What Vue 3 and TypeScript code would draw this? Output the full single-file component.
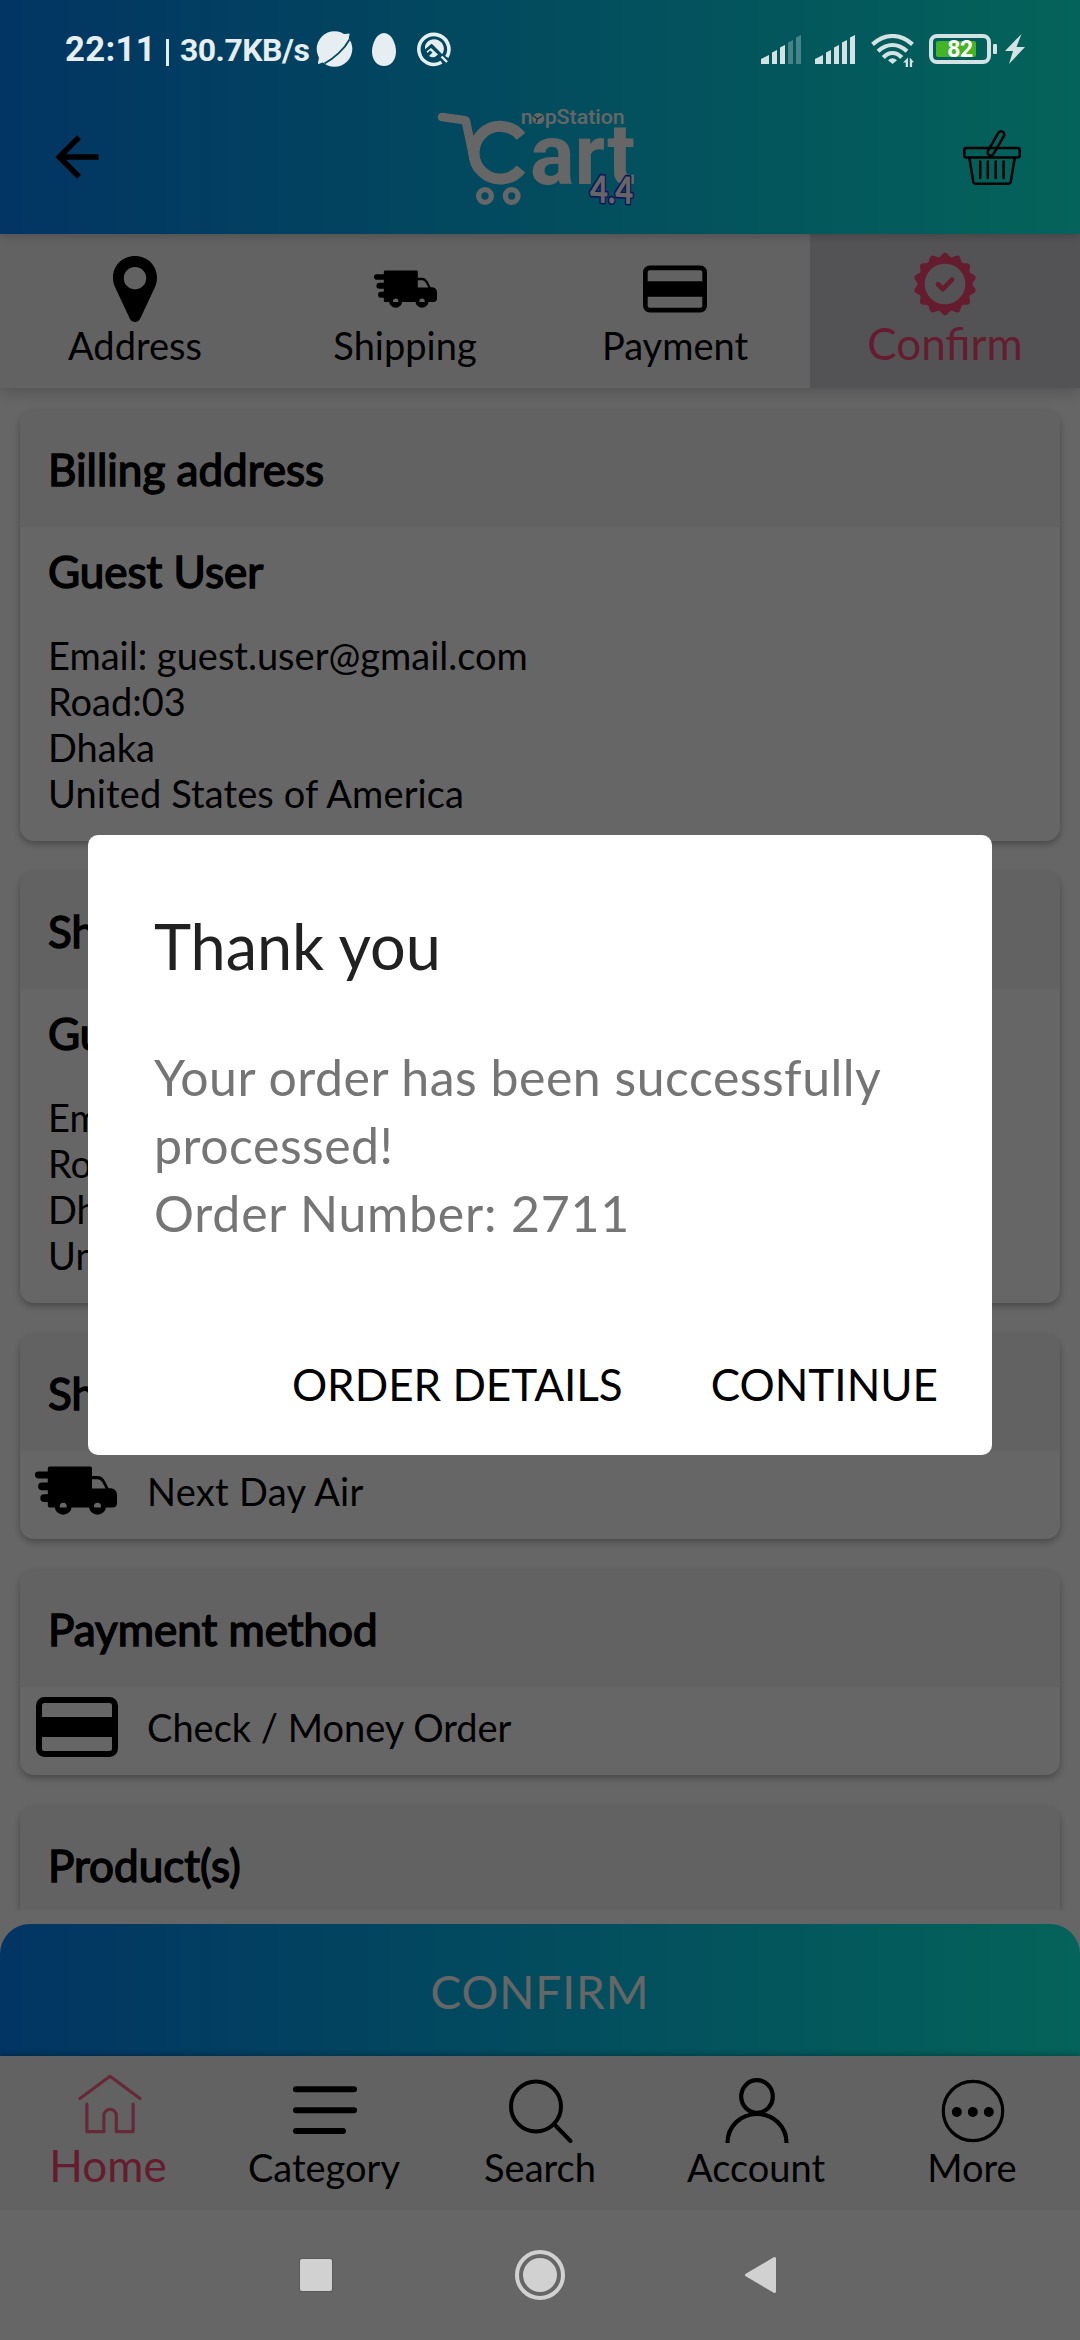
<script setup lang="ts">
interface Step { label: string; icon: string; active?: boolean }
interface Tab { label: string; icon: string; active?: boolean }
interface Address { title: string; name: string; lines: string[] }
interface Method { title: string; icon: string; text: string }

const steps: Step[] = [
  { label: 'Address', icon: 'pin' },
  { label: 'Shipping', icon: 'truck' },
  { label: 'Payment', icon: 'card' },
  { label: 'Confirm', icon: 'badge', active: true },
]

const lines = ['Email: guest.user@gmail.com', 'Road:03', 'Dhaka', 'United States of America']
const addresses: Address[] = [
  { title: 'Billing address', name: 'Guest User', lines },
  { title: 'Shipping address', name: 'Guest User', lines },
]

const methods: Method[] = [
  { title: 'Shipping method', icon: 'truck', text: 'Next Day Air' },
  { title: 'Payment method', icon: 'card', text: 'Check / Money Order' },
]

const tabs: Tab[] = [
  { label: 'Home', icon: 'home', active: true },
  { label: 'Category', icon: 'list' },
  { label: 'Search', icon: 'search' },
  { label: 'Account', icon: 'user' },
  { label: 'More', icon: 'more' },
]

// Scalloped rim of the confirm badge: 14 lobes around a circle, with a round hole.
const badgePath = (() => {
  const pts: string[] = []
  for (let i = 0; i < 168; i++) {
    const a = (i / 168) * Math.PI * 2
    const r = 29.4 + 2 * Math.cos(14 * a)
    pts.push(`${(32 + r * Math.sin(a)).toFixed(2)} ${(32 - r * Math.cos(a)).toFixed(2)}`)
  }
  return `M${pts.join('L')}ZM32 11.7a20.3 20.3 0 1 0 0 40.6a20.3 20.3 0 1 0 0-40.6Z`
})()

const signalBars = [
  'M0 29v-5l8-4v9z',
  'M11 29V17.500l5-2.500v14z',
  'M19 29V12.500l5-2.500v19z',
  'M27 29V7.500l5-2.500v24z',
  'M35 29V2.500l5-2.500v29z',
]
</script>

<template>
  <div class="phone">
    <svg class="defs" width="0" height="0" aria-hidden="true">
      <symbol id="pin" viewBox="0 0 44 66">
        <path fill-rule="evenodd" d="M22 0C9.500 0 0 9.500 0 21.500c0 4 .8 7 2.200 10L16.500 62c2 5.300 9 5.300 11 0L41.800 31.500c1.400-3 2.200-6 2.200-10C44 9.500 34.500 0 22 0ZM22 11a11.200 11.200 0 1 1 0 22.400a11.200 11.200 0 1 1 0-22.400Z" />
      </symbol>
      <symbol id="truck" viewBox="0 0 82 49">
        <path fill-rule="evenodd" d="M14.500 .5h40.800q1.700 0 1.700 1.700V10h5.500c5 0 7 3.500 11 12.300h2.500q6 1 6 7V37q0 4.500-4.500 4.500H14.500q-1.700 0-1.700-1.700V36H9.200a3.600 3.600 0 0 1 0-7.800h3.600v-4H7a3.600 3.600 0 0 1 0-7.800h5.800v-4H3.400a3.400 3.400 0 0 1 0-7h9.400V2.200q0-1.700 1.700-1.700ZM57 13.200v9.400h13.600c-3-6.500-4.600-9.400-8.600-9.400ZM28.200 35.300a5 5 0 1 0 0 10a5 5 0 1 0 0-10ZM62.500 35.300a5 5 0 1 0 0 10a5 5 0 1 0 0-10Z" />
        <circle cx="28.200" cy="40.300" r="6" fill="none" stroke="currentColor" stroke-width="5" />
        <circle cx="62.500" cy="40.300" r="6" fill="none" stroke="currentColor" stroke-width="5" />
      </symbol>
      <symbol id="card" viewBox="0 0 82 60">
        <rect x="3" y="3" width="76" height="54" rx="5.500" fill="none" stroke="currentColor" stroke-width="6" />
        <path d="M3 20h76v20H3z" />
      </symbol>
      <symbol id="badge" viewBox="0 0 64 64">
        <path fill-rule="evenodd" :d="badgePath" />
        <path d="M25 32.300l4.800 4.800l9.200-9.500" fill="none" stroke="currentColor" stroke-width="4.800" stroke-linecap="round" stroke-linejoin="round" />
      </symbol>
      <symbol id="home" viewBox="0 0 66 66">
        <g fill="none" stroke="currentColor" stroke-width="3.200" stroke-linecap="round" stroke-linejoin="round" opacity=".82">
          <path d="M4 26.500L34 4.200L64 26.500" />
          <path d="M10.900 32V59.700h17V43.500a6.200 6.200 0 0 1 12.400 0V59.700h16.800V32" />
        </g>
      </symbol>
      <symbol id="list" viewBox="0 0 66 66">
        <path d="M4 17.300h58M4 38.300h58M4 59h47" stroke="currentColor" stroke-width="6" stroke-linecap="round" />
      </symbol>
      <symbol id="search" viewBox="0 0 66 66">
        <g fill="none" stroke="currentColor" stroke-width="4" stroke-linecap="round">
          <circle cx="28" cy="34.500" r="25" />
          <path d="M46 52l16.500 17" />
        </g>
      </symbol>
      <symbol id="user" viewBox="0 0 66 66">
        <g fill="none" stroke="currentColor" stroke-width="4.200">
          <ellipse cx="33" cy="24.500" rx="15.800" ry="16.300" />
          <path d="M3.500 71C3.500 54 17 42 33 42S62.500 54 62.500 71" />
        </g>
      </symbol>
      <symbol id="more" viewBox="0 0 66 66">
        <circle cx="33" cy="39" r="29.700" fill="none" stroke="currentColor" stroke-width="3.200" />
        <circle cx="16.800" cy="40" r="5" /><circle cx="32.800" cy="40" r="5" /><circle cx="48.800" cy="40" r="5" />
      </symbol>
    </svg>

    <header class="header">
      <div class="status">
        <div class="status-left">
          <span class="clock">22:11</span>
          <span class="divider"></span>
          <span class="speed">30.7KB/s</span>
          <svg class="s-planet" width="38" height="38" viewBox="0 0 38 38">
            <circle cx="19.500" cy="19" r="17.800" fill="currentColor" />
            <path d="M3.500 33.500L5 24L13 30Z M34.200 4L25 5L32 13Z" fill="currentColor" stroke="currentColor" stroke-width="1" stroke-linejoin="round" />
            <path d="M9.500 33.500C19 28.500 29.500 19 34.500 9.500" fill="none" stroke="#034860" stroke-width="1.800" />
          </svg>
          <svg class="s-egg" width="24" height="33" viewBox="0 0 24 33">
            <path d="M12 0C5 0 0 10 0 18.500S5 33 12 33s12-6 12-14.500S19 0 12 0Z" fill="currentColor" />
          </svg>
          <svg class="s-ring" width="36" height="36" viewBox="0 0 36 36">
            <path d="M25.500 31.300A15 15 0 1 1 30.800 26" fill="none" stroke="currentColor" stroke-width="3.600" />
            <path d="M9 15.200A9.600 9.600 0 1 1 26 23.500L16.500 13.500L9 19.500Z" fill="currentColor" />
            <path d="M8.500 20L15.500 14L27.500 26" fill="none" stroke="#034960" stroke-width="2" />
            <path d="M10.500 20.500L15 17L22 23.500Q18 28 13 25L16.500 21.500L14 19.500L11.500 22Z" fill="currentColor" />
            <path d="M25.500 25.500L31 31" stroke="currentColor" stroke-width="2.400" />
          </svg>
        </div>
        <div class="status-right">
          <svg width="40" height="29" viewBox="0 0 40 29">
            <path v-for="(bar, i) in signalBars" :key="i" :d="bar" fill="currentColor" :opacity="i > 2 ? 0.32 : 1" />
          </svg>
          <svg class="s-signal" width="40" height="29" viewBox="0 0 40 29">
            <path v-for="(bar, i) in signalBars" :key="i" :d="bar" fill="currentColor" />
          </svg>
          <svg class="s-wifi" width="44" height="34" viewBox="0 0 44 34">
            <g fill="none" stroke="currentColor" stroke-width="4.200">
              <path d="M1.500 10.300Q11 2 21.500 2T41.500 10.300" />
              <path d="M7 17.300Q13.500 11 21.500 11T36 17.300" />
              <path d="M12.300 23.500Q16.300 19 21.500 19T30.700 23.500" />
            </g>
            <path d="M21.500 30L17 26.200Q21.500 22.500 26 26.200Z" fill="currentColor" />
            <path d="M37 23.500v9.500h-2.300v-4.500h-2.700zM38.800 33v-9.500l4.200 4.800h-1.900v4.700z" fill="currentColor" />
          </svg>
          <span class="battery"><span class="charge"></span><span class="percent">82</span></span>
          <span class="battery-cap"></span>
          <svg class="s-bolt" width="20" height="30" viewBox="0 0 20 30">
            <path d="M16.500 0L0 17h8L4 30L20 13h-8.500Z" fill="currentColor" />
          </svg>
        </div>
      </div>
      <div class="toolbar">
        <svg class="back" width="44" height="44" viewBox="0 0 44 44">
          <path d="M43.500 22H4M24 2.200L4.200 22L24 41.800" fill="none" stroke="#000" stroke-width="5.600" />
        </svg>
        <svg class="logo" width="200" height="100" viewBox="0 0 600 300">
          <g fill="none" stroke="#fff">
            <path d="M15 24L84 34Q86 34 87 38L110 148" stroke-width="26" stroke-linecap="round" stroke-linejoin="round" />
            <path d="M252 82A79 79 0 1 0 252 180" stroke-width="33" />
            <circle cx="144" cy="261" r="19" stroke-width="16" />
            <circle cx="224" cy="261" r="19" stroke-width="16" />
          </g>
          <g fill="#fff">
            <text x="251" y="45" class="brand" textLength="312" lengthAdjust="spacingAndGlyphs">nopStation</text>
            <text x="279" y="225" class="word" textLength="316" lengthAdjust="spacingAndGlyphs">art</text>
          </g>
          <circle cx="302" cy="29" r="16" fill="#fff" />
          <path d="M289 20l12 10l14-9M301 30l-4 12" fill="none" stroke="#0a7fa0" stroke-width="3.500" />
          <g transform="translate(459 280) skewY(2)">
            <text x="0" y="0" class="version" textLength="130" lengthAdjust="spacingAndGlyphs">4.4</text>
          </g>
        </svg>
        <svg class="basket" width="58" height="56" viewBox="0 0 58 56">
          <g fill="none" stroke="#000" stroke-width="2.500" stroke-linejoin="round">
            <rect x="1.300" y="18" width="55.400" height="9.400" rx="2" />
            <path d="M6.300 27.500L10.300 52Q10.700 53.700 12.500 53.700H45.500Q47.300 53.700 47.700 52L51.800 27.500" />
            <path d="M17.200 31.500V48M24.800 31.500V48M32.700 31.500V48M40.600 31.500V48" stroke-linecap="round" />
            <rect x="29.700" y="0" width="6.400" height="27" rx="3.200" transform="rotate(30 33 13.500)" />
          </g>
        </svg>
      </div>
    </header>

    <nav class="steps">
      <div v-for="s in steps" :key="s.label" class="step" :class="{ active: s.active }">
        <span class="step-icon"><svg :class="'i-' + s.icon" fill="currentColor"><use :href="'#' + s.icon" /></svg></span>
        <span class="step-label">{{ s.label }}</span>
      </div>
    </nav>

    <main class="content">
      <section v-for="a in addresses" :key="a.title" class="panel">
        <h2>{{ a.title }}</h2>
        <div class="address">
          <h3>{{ a.name }}</h3>
          <p v-for="l in a.lines" :key="l">{{ l }}</p>
        </div>
      </section>
      <section v-for="m in methods" :key="m.title" class="panel">
        <h2>{{ m.title }}</h2>
        <div class="method">
          <svg :class="'m-' + m.icon" fill="currentColor"><use :href="'#' + m.icon" /></svg>
          <p :class="'t-' + m.icon">{{ m.text }}</p>
        </div>
      </section>
      <section class="panel">
        <h2>Product(s)</h2>
        <div class="products"></div>
      </section>
    </main>

    <button class="confirm">CONFIRM</button>

    <nav class="tabs">
      <div v-for="t in tabs" :key="t.label" class="tab" :class="{ active: t.active }">
        <svg width="66" height="74" fill="currentColor" overflow="visible"><use :href="'#' + t.icon" width="66" height="66" /></svg>
        <span>{{ t.label }}</span>
      </div>
    </nav>

    <footer class="system">
      <span class="sys-square"></span>
      <span class="sys-home"><i></i></span>
      <svg class="sys-back" width="33" height="38" viewBox="0 0 33 38">
        <path d="M2.500 19L30.500 2.500V35.500Z" fill="currentColor" stroke="currentColor" stroke-width="3" stroke-linejoin="round" />
      </svg>
    </footer>

    <div class="scrim">
      <div class="dialog">
        <h1>Thank you</h1>
        <p>Your order has been successfully processed!</p>
        <p class="number">Order Number: 2711</p>
        <div class="actions">
          <button>ORDER DETAILS</button>
          <button>CONTINUE</button>
        </div>
      </div>
    </div>
  </div>
</template>

<style>
body { background: #666; }
</style>

<style scoped>
.phone {
  position: relative;
  display: flex;
  flex-direction: column;
  width: 1080px;
  height: 2340px;
  overflow: hidden;
  background: #fff;
  color: #000;
  font-family: "Lato", sans-serif;
  font-size: 38px;
}
.phone *, .phone *::before, .phone *::after { box-sizing: border-box; }
h1, h2, h3, p { margin: 0; font-weight: 400; }
button { border: 0; padding: 0; background: none; font: inherit; color: inherit; }
svg { display: block; flex: none; }
symbol { overflow: visible; }
.defs { position: absolute; }

.header {
  position: relative;
  flex: none;
  height: 234px;
  background: linear-gradient(90deg, #0584f8, #0af8e0);
  box-shadow: 0 2px 9px rgba(0, 0, 0, .2);
}
.status {
  position: relative;
  z-index: 20;
  display: flex;
  justify-content: space-between;
  height: 100px;
  padding: 0 55px 0 65px;
  font-family: "Roboto", sans-serif;
}
.status-left { display: flex; align-items: center; height: 98px; color: #e6eef1; }
.clock { font-size: 34.7px; font-weight: 700; letter-spacing: .3px; line-height: 40px; }
.divider { width: 3px; height: 27px; margin: 7px 0 0 10px; background: currentColor; }
.speed { margin: 2px 0 0 11px; font-size: 32px; font-weight: 700; letter-spacing: -.5px; line-height: 40px; }
.s-planet { margin-left: 6px; }
.s-egg { margin-left: 19px; }
.s-ring { margin-left: 20px; }
.status-right { display: flex; align-items: center; height: 98px; color: #d3e2e2; }
.s-signal { margin-left: 14px; }
.s-wifi { margin: 3px 0 0 16px; }
.battery {
  position: relative;
  display: flex;
  align-items: center;
  justify-content: center;
  width: 62px;
  height: 30px;
  margin-left: 14px;
  border: 4px solid currentColor;
  border-radius: 8px;
}
.charge { position: absolute; left: 3px; top: 3px; width: 40px; height: 16px; border-radius: 2px; background: #44b324; }
.percent { position: relative; padding-top: 2px; color: #fff; font-size: 23px; font-weight: 700; line-height: 22px; letter-spacing: -.5px; }
.battery-cap { width: 4px; height: 10px; margin-left: 2px; border-radius: 1px; background: currentColor; }
.s-bolt { margin-left: 8px; }

.toolbar { display: flex; align-items: flex-start; height: 134px; padding-top: 5px; }
.back { margin: 30px 0 0 55px; }
.logo { margin: 4px 0 0 338px; overflow: visible; }
.basket { margin: 25px 0 0 326px; overflow: visible; }
.brand { font: 500 62px "Roboto", sans-serif; }
.word { font: 700 254px "Roboto", sans-serif; }
.version { font: 900 112px "Lato", sans-serif; fill: #fff; stroke: #2f2fe0; stroke-width: 10; stroke-linejoin: round; paint-order: stroke; }

.steps {
  display: flex;
  flex: none;
  height: 154px;
  background: #f5f5f5;
  box-shadow: 0 3px 16px rgba(0, 0, 0, .22);
}
.step { display: flex; flex: 1; flex-direction: column; align-items: center; padding-top: 22px; }
.step.active { background: #d0d0d7; color: #ff4776; padding-top: 17px; }
.step-icon { display: flex; align-items: center; justify-content: center; height: 66px; }
.step-label { line-height: 46px; }
.active .step-label { margin-top: 3px; font-size: 44px; }
.i-pin { width: 44px; height: 66px; }
.i-truck { width: 63px; height: 38px; }
.i-card { width: 64px; height: 48px; }
.i-badge { width: 64px; height: 64px; }

.content { display: flex; flex: none; flex-direction: column; gap: 31px; height: 1522px; padding: 22px 20px 0; overflow: hidden; }
.panel { flex: none; overflow: hidden; border-radius: 14px; background: #fff; box-shadow: 0 3px 7px rgba(0, 0, 0, .3); }
h2 {
  height: 117px;
  padding: 33px 0 0 28px;
  background: #f5f5f5;
  font-size: 44px;
  line-height: 53px;
  -webkit-text-stroke: 1.5px #000;
}
h3 { margin-bottom: 34px; font-size: 44px; line-height: 53px; -webkit-text-stroke: 1.5px #000; }
.address { height: 314px; padding: 18px 0 0 28px; }
.address p { line-height: 46px; }
.address p:last-child { letter-spacing: .12px; }
.method { display: flex; align-items: center; gap: 30px; height: 88px; padding: 0 0 9px 15px; }
.method p { line-height: 46px; }
.t-truck { letter-spacing: .3px; }
.m-truck { width: 82px; height: 49px; }
.m-card { width: 82px; height: 60px; margin-left: 1px; margin-right: -1px; }
.products { height: 200px; }

.confirm {
  flex: none;
  height: 132px;
  margin-top: 14px;
  border-radius: 30px 30px 0 0;
  background: linear-gradient(90deg, #0584f8, #0af8e0);
  color: #fff;
  font-size: 46px;
  letter-spacing: .9px;
  padding-top: 3px;
}
.tabs { position: relative; display: flex; flex: none; height: 154px; background: #f5f5f5; box-shadow: 0 -1px 6px rgba(0, 0, 0, .3); }
.tab { display: flex; flex: 1; flex-direction: column; align-items: center; padding-top: 16px; }
.tab svg { margin: 0 -1px -2px 1px; }
.tab span { line-height: 46px; }
.tab.active { color: #ff4776; }
.tab.active span { font-size: 44px; line-height: 43px; }

.system {
  position: relative;
  z-index: 20;
  display: flex;
  flex: none;
  align-items: center;
  height: 130px;
  background: #666;
  color: #d1d1d1;
}
.sys-square { width: 32px; height: 32px; margin-left: 300px; border-radius: 2px; background: currentColor; box-shadow: 0 0 1px 1px rgba(0, 0, 0, .12); }
.sys-home { display: flex; align-items: center; justify-content: center; width: 50px; height: 50px; margin-left: 183px; border: 4px solid currentColor; border-radius: 50%; }
.sys-home i { width: 34px; height: 34px; border-radius: 50%; background: currentColor; }
.sys-back { margin-left: 179px; }

.scrim {
  position: absolute;
  inset: 0;
  z-index: 10;
  display: flex;
  flex-direction: column;
  align-items: center;
  padding-top: 835px;
  background: rgba(0, 0, 0, .6);
}
.dialog { width: 904px; height: 620px; padding: 73px 54px 0 66px; border-radius: 10px; background: #fff; }
.dialog h1 { margin-bottom: 59px; color: #212121; font-size: 63px; line-height: 76px; letter-spacing: -.05px; }
.dialog p { color: #757575; font-size: 50px; line-height: 68px; letter-spacing: .5px; }
.dialog .number { letter-spacing: .8px; }
.actions { display: flex; justify-content: flex-end; gap: 88px; margin-top: 111px; font-size: 44px; line-height: 53px; }
</style>
